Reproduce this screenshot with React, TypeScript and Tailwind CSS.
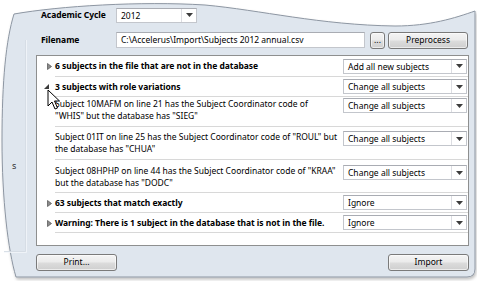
import React from 'react';

type Row = {
  kind: 'group' | 'detail';
  open?: boolean;
  lines: string[];
  choice: string;
  h: string;
  pt?: string;
};

const rows: Row[] = [
  { kind: 'group', lines: ['6 subjects in the file that are not in the database'], choice: 'Add all new subjects', h: 'h-[21px]' },
  { kind: 'group', open: true, lines: ['3 subjects with role variations'], choice: 'Change all subjects', h: 'h-[20px]' },
  {
    kind: 'detail',
    lines: ['Subject 10MAFM on line 21 has the Subject Coordinator code of', '"WHIS" but the database has "SIEG"'],
    choice: 'Change all subjects',
    h: 'h-[30px]',
    pt: 'pt-[1px]',
  },
  {
    kind: 'detail',
    lines: ['Subject 01IT on line 25 has the Subject Coordinator code of "ROUL" but', 'the database has "CHUA"'],
    choice: 'Change all subjects',
    h: 'h-[33px]',
    pt: 'pt-[4px]',
  },
  {
    kind: 'detail',
    lines: ['Subject 08HPHP on line 44 has the Subject Coordinator code of "KRAA"', 'but the database has "DODC"'],
    choice: 'Change all subjects',
    h: 'h-[33px]',
    pt: 'pt-[5px]',
  },
  { kind: 'group', lines: ['63 subjects that match exactly'], choice: 'Ignore', h: 'h-[20px]' },
  { kind: 'group', lines: ['Warning: There is 1 subject in the database that is not in the file.'], choice: 'Ignore', h: 'h-[20px]' },
];

function Arrow() {
  return (
    <svg width="7" height="4" viewBox="0 0 7 4">
      <path d="M0 0 H7 L3.5 4 Z" fill="#3c3c3c" />
    </svg>
  );
}

function Combo({ value, w }: { value: string; w: string }) {
  return (
    <div className={`${w} h-[15px] flex bg-white border border-[#c3c6cc] border-t-[#a9acb3] shrink-0`}>
      <div className="flex-1 pl-[4px] leading-[13px] truncate">{value}</div>
      <div className="w-[15px] border-l border-[#dcdde2] flex items-center justify-center">
        <Arrow />
      </div>
    </div>
  );
}

function Btn({ label, w }: { label: string; w: string }) {
  return (
    <div
      className={`${w} h-[17px] rounded-[3px] border border-[#7a7a7a] bg-[linear-gradient(#f4f4f4_0%,#ebebeb_48%,#dcdcdc_52%,#cfcfcf_100%)] flex items-center justify-center leading-none shadow-[inset_0_0_0_1px_rgba(255,255,255,0.6)]`}
    >
      {label}
    </div>
  );
}

function Twisty({ open }: { open?: boolean }) {
  if (open) {
    return (
      <svg width="6" height="6" viewBox="0 0 6 6" className="ml-[7px]">
        <path d="M5 0 V5 H0 Z" fill="#3b3b3b" />
      </svg>
    );
  }
  return (
    <svg width="5" height="7" viewBox="0 0 5 7" className="ml-[10px]">
      <path d="M0.5 0.5 L4.5 3.5 L0.5 6.5 Z" fill="#8a8a8a" stroke="#5d5d5d" strokeWidth="0.8" />
    </svg>
  );
}

export default function App() {
  return (
    <div className="relative w-[477px] h-[281px] bg-white overflow-hidden font-['Noto_Sans',sans-serif] text-[8.5px] text-black">
      {/* torn window backdrop */}
      <svg className="absolute inset-0" width="477" height="281" viewBox="0 0 477 281">
        <defs>
          <filter id="sh" x="-5%" y="-5%" width="110%" height="115%">
            <feDropShadow dx="1" dy="2" stdDeviation="1.5" floodColor="#000" floodOpacity="0.25" />
          </filter>
        </defs>
        <path
          d="M14 14 C 60 6 140 1 205 5 C 260 10 320 25 395 26 C 430 26 455 18 475 11 L475 269 Q475 277 467 277 L16 277 C 8 250 2 200 2 140 C 2 80 6 40 14 14 Z"
          fill="#dfe6ee"
          stroke="#8d96a2"
          strokeWidth="1"
          filter="url(#sh)"
        />
        <path d="M26 40 V252 H4" fill="none" stroke="#f5f8fb" strokeWidth="1.5" />
        <path d="M25.5 40 V251.5 H4" fill="none" stroke="#c5ced9" strokeWidth="0.6" />
      </svg>
      <div className="absolute left-[12px] top-[159px] text-[#333] text-[9px]">s</div>

      <div className="relative pl-[36px] pr-[8px] pt-[7px]">
        <div className="flex items-center h-[16px]">
          <div className="w-[80px] pl-[5px] font-bold tracking-[-0.05px]">Academic Cycle</div>
          <Combo value="2012" w="w-[81px]" />
        </div>

        <div className="flex items-center h-[16px] mt-[9px]">
          <div className="w-[80px] pl-[5px] font-bold tracking-[-0.05px]">Filename</div>
          <div className="w-[249px] h-[16px] bg-white border border-[#c3c6cc] border-t-[#a9acb3] pl-[4px] leading-[14px]">
            C:\Accelerus\Import\Subjects 2012 annual.csv
          </div>
          <div className="ml-[5px]">
            <Btn label="..." w="w-[15px]" />
          </div>
          <div className="ml-[3px]">
            <Btn label="Preprocess" w="w-[80px]" />
          </div>
        </div>

        <div className="mt-[7px] h-[191px] bg-white border border-[#8e8f8f]">
          {rows.map((r, i) => (
            <div key={i} className={`flex ${r.h}`}>
              <div className={`w-[18px] shrink-0 flex ${r.kind === 'group' ? 'items-center' : ''}`}>
                {r.kind === 'group' && <Twisty open={r.open} />}
              </div>
              <div
                className={`flex-1 flex justify-between border-b border-[#d8d8d8] pr-[1px] ${
                  r.kind === 'group' ? 'items-center' : `items-start ${r.pt}`
                }`}
              >
                <div
                  className={`whitespace-nowrap leading-[12px] ${r.kind === 'group' ? 'font-bold tracking-[-0.05px]' : ''}`}
                >
                  {r.lines.map((l, j) => (
                    <div key={j}>{l}</div>
                  ))}
                </div>
                <Combo value={r.choice} w="w-[124px]" />
              </div>
            </div>
          ))}
        </div>

        <div className="mt-[8px] flex justify-between">
          <Btn label="Print..." w="w-[81px]" />
          <Btn label="Import" w="w-[81px]" />
        </div>
      </div>

      {/* mouse pointer */}
      <svg className="absolute left-[47px] top-[89px]" width="14" height="22" viewBox="0 0 14 22">
        <path d="M1 1 V17 L5 13 L8 20 L10.5 19 L7.5 12 L12.5 12 Z" fill="#fff" stroke="#000" strokeWidth="1" strokeLinejoin="round" />
      </svg>
    </div>
  );
}
